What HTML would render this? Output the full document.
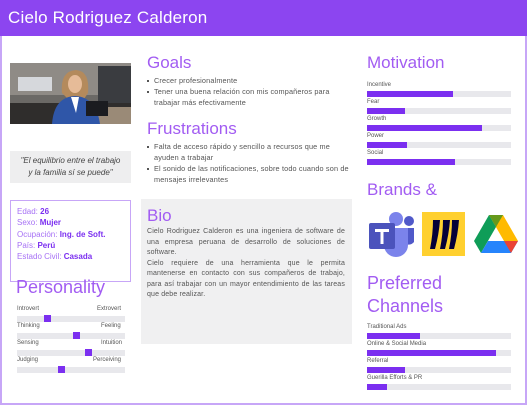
<!DOCTYPE html>
<html><head><meta charset="utf-8"><style>
*{margin:0;padding:0;box-sizing:border-box}
body{width:527px;height:406px;background:#fff;font-family:"Liberation Sans",sans-serif;position:relative;overflow:hidden;color:#555}
.a{position:absolute}
.hdr{left:0;top:0;width:527px;height:36px;background:#8c45f0}
.hdr span{position:absolute;left:8px;top:8px;color:#fff;font-size:17px;letter-spacing:0.2px}
.frame{left:0;top:36px;width:527px;height:369px;border:2px solid #c7a6f7;border-top:none}
.h{color:#a25cf2;font-size:17px;white-space:nowrap}
.t{font-size:7.3px;line-height:11px;color:#555;letter-spacing:0.15px}
ul{list-style:none}
li{position:relative;padding-left:9px}
li:before{content:"";position:absolute;left:2px;top:5px;width:2px;height:2px;background:#555}
.bar{position:absolute;height:6px;background:#e8e8ec}
.fill{position:absolute;left:0;top:0;height:6px;background:#7b2ff0}
.lb{position:absolute;font-size:6px;color:#555}
.mk{position:absolute;width:7px;height:7px;background:#7b2ff0}
</style></head><body>
<div class="a frame"></div>
<div class="a hdr"><span>Cielo Rodriguez Calderon</span></div>

<svg class="a" style="left:10px;top:63px" width="121" height="61" viewBox="0 0 121 61">
<rect width="121" height="61" fill="#6b6966"/>
<rect width="121" height="32" fill="#8f8b86"/>
<rect x="8" y="14" width="34" height="14" fill="#d6d8dc"/>
<rect x="88" y="3" width="33" height="40" fill="#3a3c40"/>
<rect x="0" y="40" width="121" height="21" fill="#2f2d2c"/>
<rect x="70" y="44" width="51" height="17" fill="#9a8a77"/>
<path d="M52 30 Q50 8 66 7 Q80 8 78 30 L74 36 L58 36Z" fill="#b48a5c"/>
<ellipse cx="65" cy="21" rx="7" ry="9" fill="#e6bb98"/>
<path d="M42 61 Q44 34 65 33 Q86 34 90 61Z" fill="#2f56a8"/>
<path d="M61 34 L69 34 L66 50Z" fill="#fff"/>
<rect x="76" y="38" width="22" height="15" fill="#1b1c20"/>
</svg>

<div class="a" style="left:10px;top:151px;width:121px;height:32px;background:#eeeeef;font-style:italic;font-size:8px;color:#444;text-align:center;line-height:12px;padding-top:4px">"El equilibrio entre el trabajo<br>y la familia sí se puede"</div>

<div class="a" style="left:10px;top:200px;width:121px;height:82px;border:1.5px solid #c7a6f7;background:#fff;padding:5px 6px;font-size:8px;line-height:11.3px;color:#a772f5">
Edad: <b style="color:#7b2ff0">26</b><br>Sexo: <b style="color:#7b2ff0">Mujer</b><br>Ocupación: <b style="color:#7b2ff0">Ing. de Soft.</b><br>País: <b style="color:#7b2ff0">Perú</b><br>Estado Civil: <b style="color:#7b2ff0">Casada</b></div>

<div class="a h" style="left:16px;top:277px;font-size:18px">Personality</div>
<div class="lb" style="left:17px;top:306px">Introvert</div><div class="lb" style="left:97px;top:306px">Extrovert</div>
<div class="bar" style="left:17px;top:316px;width:108px"></div><div class="mk" style="left:44px;top:315px"></div>
<div class="lb" style="left:17px;top:323px">Thinking</div><div class="lb" style="left:101px;top:323px">Feeling</div>
<div class="bar" style="left:17px;top:333px;width:108px"></div><div class="mk" style="left:73px;top:332px"></div>
<div class="lb" style="left:17px;top:340px">Sensing</div><div class="lb" style="left:101px;top:340px">Intuition</div>
<div class="bar" style="left:17px;top:350px;width:108px"></div><div class="mk" style="left:85px;top:349px"></div>
<div class="lb" style="left:17px;top:357px">Judging</div><div class="lb" style="left:93px;top:357px">Perceiving</div>
<div class="bar" style="left:17px;top:367px;width:108px"></div><div class="mk" style="left:58px;top:366px"></div>

<div class="a h" style="left:147px;top:53px">Goals</div>
<ul class="a t" style="left:145px;top:75px;width:210px">
<li>Crecer profesionalmente</li>
<li>Tener una buena relación con mis compañeros para trabajar más efectivamente</li></ul>
<div class="a h" style="left:147px;top:119px">Frustrations</div>
<ul class="a t" style="left:145px;top:141px;width:210px">
<li>Falta de acceso rápido y sencillo a recursos que me ayuden a trabajar</li>
<li>El sonido de las notificaciones, sobre todo cuando son de mensajes irrelevantes</li></ul>

<div class="a" style="left:141px;top:199px;width:211px;height:145px;background:#f0f0f1"></div>
<div class="a h" style="left:147px;top:206px">Bio</div>
<div class="a t" style="left:147px;top:227px;width:198px;text-align:justify;line-height:10.5px;font-size:7px">Cielo Rodriguez Calderon es una ingeniera de software de una empresa peruana de desarrollo de soluciones de software.<br>Cielo requiere de una herramienta que le permita mantenerse en contacto con sus compañeros de trabajo, para así trabajar con un mayor entendimiento de las tareas que debe realizar.</div>

<div class="a h" style="left:367px;top:53px">Motivation</div>
<div class="lb" style="left:367px;top:82px">Incentive</div><div class="bar" style="left:367px;top:91px;width:144px"><div class="fill" style="width:86px"></div></div>
<div class="lb" style="left:367px;top:99px">Fear</div><div class="bar" style="left:367px;top:108px;width:144px"><div class="fill" style="width:38px"></div></div>
<div class="lb" style="left:367px;top:116px">Growth</div><div class="bar" style="left:367px;top:125px;width:144px"><div class="fill" style="width:115px"></div></div>
<div class="lb" style="left:367px;top:133px">Power</div><div class="bar" style="left:367px;top:142px;width:144px"><div class="fill" style="width:40px"></div></div>
<div class="lb" style="left:367px;top:150px">Social</div><div class="bar" style="left:367px;top:159px;width:144px"><div class="fill" style="width:88px"></div></div>

<div class="a h" style="left:367px;top:180px">Brands &amp;</div>
<svg class="a" style="left:368px;top:209px" width="48" height="48" viewBox="0 0 48 48">
<circle cx="28" cy="10" r="7" fill="#7b83eb"/><circle cx="41" cy="12" r="5" fill="#5059c9"/>
<path d="M35 19h11v14a7 7 0 0 1-11 0z" fill="#5059c9"/>
<path d="M16 19h24v17a12 12 0 0 1-24 0z" fill="#7b83eb"/>
<rect x="1" y="14" width="26" height="26" rx="2" fill="#4b53bc"/>
<path d="M7 20h14v3h-5.5v12h-3V23H7z" fill="#fff"/>
</svg>
<svg class="a" style="left:422px;top:212px" width="43" height="44" viewBox="0 0 43 44">
<rect width="43" height="44" fill="#ffd02f"/>
<path d="M11 8h7q-1 14-5 29H8q3-15 3-29zM21 8h7q-1 14-5 29h-5q3-15 3-29zM30 8h7q-1 14-5 29h-5q3-15 3-29z" fill="#050038"/>
</svg>
<svg class="a" style="left:474px;top:213px" width="44" height="40" viewBox="0 0 44 40">
<path d="M15 2h14l15 26h-14z" fill="#ffba00"/>
<path d="M15 2L0 28l7 12 15-26z" fill="#0f9d58"/>
<path d="M7 40h30l7-12H14z" fill="#2684fc"/>
<path d="M30 28h14l-7 12z" fill="#ea4335"/>
<path d="M15 2h14l-7 12z" fill="#00832d" opacity=".6"/>
</svg>

<div class="a h" style="left:367px;top:272px;font-size:18px;line-height:23px">Preferred<br>Channels</div>
<div class="lb" style="left:367px;top:324px">Traditional Ads</div><div class="bar" style="left:367px;top:333px;width:144px"><div class="fill" style="width:53px"></div></div>
<div class="lb" style="left:367px;top:341px">Online &amp; Social Media</div><div class="bar" style="left:367px;top:350px;width:144px"><div class="fill" style="width:129px"></div></div>
<div class="lb" style="left:367px;top:358px">Referral</div><div class="bar" style="left:367px;top:367px;width:144px"><div class="fill" style="width:38px"></div></div>
<div class="lb" style="left:367px;top:375px">Guerilla Efforts &amp; PR</div><div class="bar" style="left:367px;top:384px;width:144px"><div class="fill" style="width:20px"></div></div>
</body></html>
